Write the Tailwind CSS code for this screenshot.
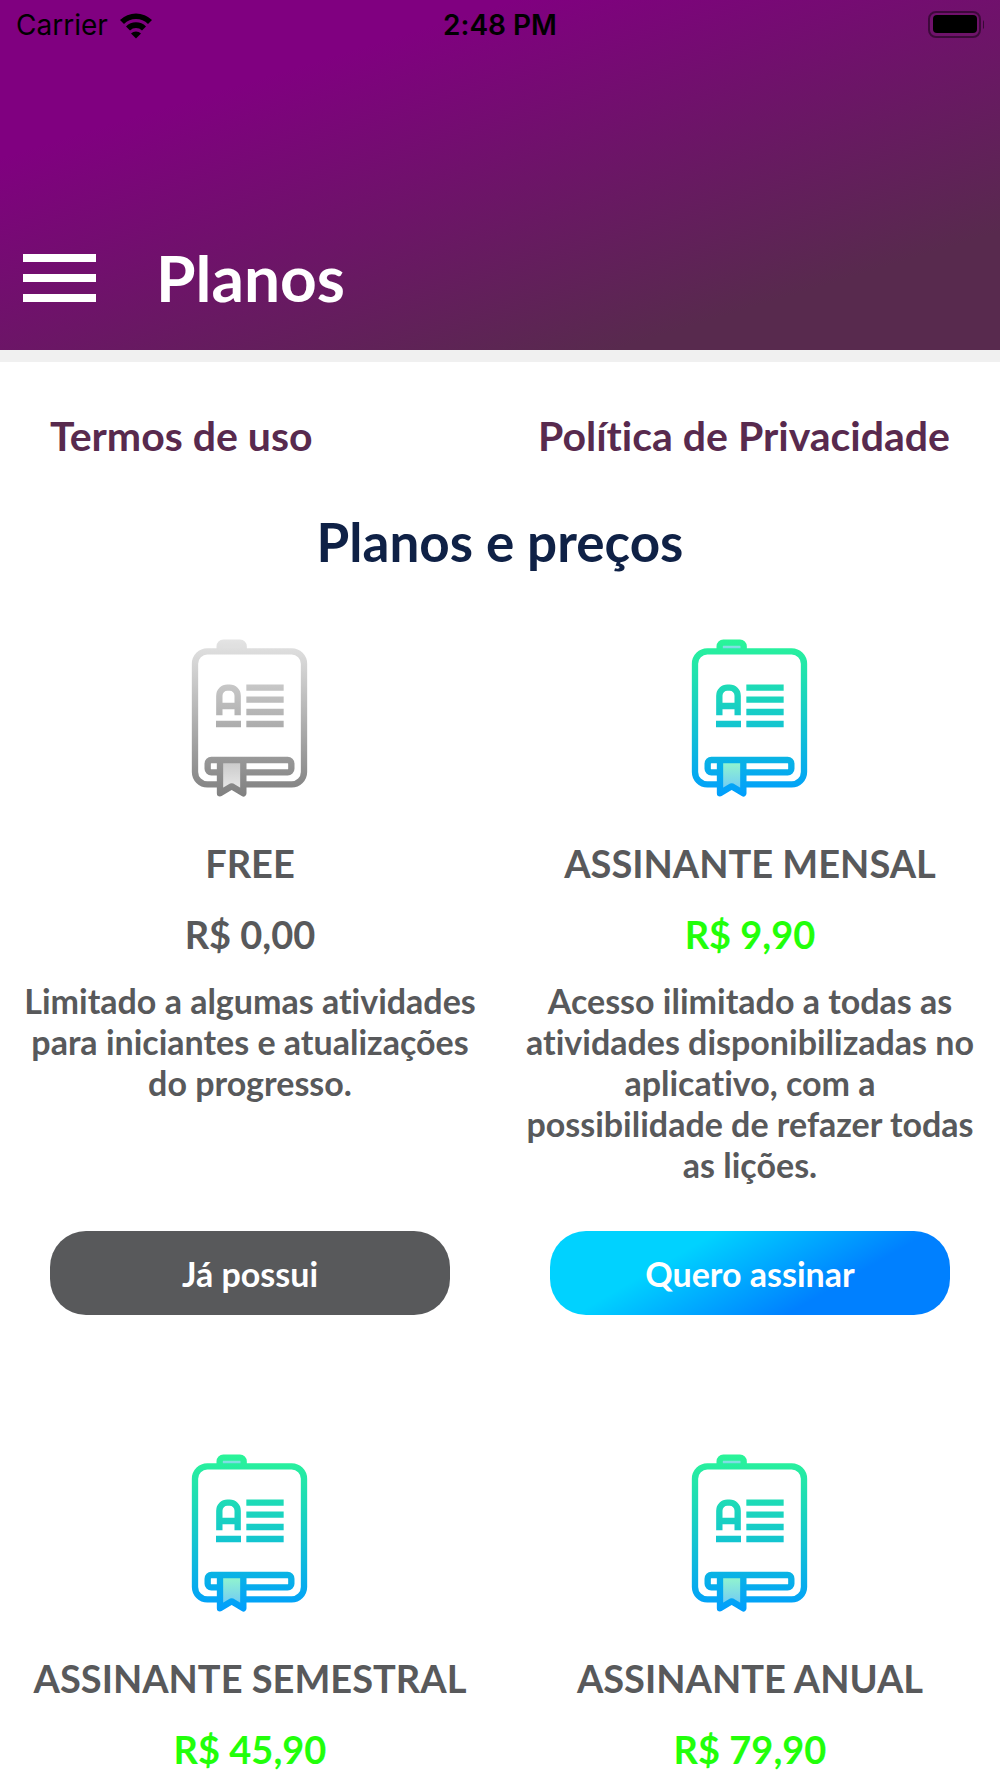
<!DOCTYPE html>
<html lang="pt-BR">

<head>
	<meta charset="UTF-8">
	<meta name="viewport" content="width=device-width, initial-scale=1.0">
	<title>Planos</title>
	<script src="https://cdn.jsdelivr.net/npm/@tailwindcss/browser@4"></script>
</head>

<body class="h-screen flex flex-col overflow-hidden bg-white font-['Lato',sans-serif] font-bold text-[#58595b] [font-variant-ligatures:none]">
	<!-- Shared icon shapes -->
	<svg class="absolute size-0" aria-hidden="true">
		<defs>
			<linearGradient id="color" gradientUnits="userSpaceOnUse" x1="0" y1="57" x2="0" y2="528">
				<stop offset="0" stop-color="#2af598" />
				<stop offset="1" stop-color="#009efd" />
			</linearGradient>
			<linearGradient id="gray" gradientUnits="userSpaceOnUse" x1="0" y1="57" x2="0" y2="528">
				<stop offset="0" stop-color="#e4e4e4" />
				<stop offset="1" stop-color="#808080" />
			</linearGradient>
			<linearGradient id="color-ribbon" x1="0" y1="0" x2="0" y2="1">
				<stop offset="0" stop-color="#94f8cb" />
				<stop offset="1" stop-color="#6cc4fb" />
			</linearGradient>
			<linearGradient id="gray-ribbon" x1="0" y1="0" x2="0" y2="1">
				<stop offset="0" stop-color="#c8c8c8" />
				<stop offset="1" stop-color="#ececec" />
			</linearGradient>
			<g id="book" fill="none" stroke-width="19">
				<path d="M149 492H112a37 37 0 0 1-37-37V130a37 37 0 0 1 37-37H365a37 37 0 0 1 37 37V455a37 37 0 0 1-37 37H221" />
				<path d="M149 93V78a11 11 0 0 1 11-11H210a11 11 0 0 1 11 11V93" />
				<path d="M148 285V226a24 24 0 0 1 24-24H179a24 24 0 0 1 24 24V285M148 257H203M138 311H213" />
				<path d="M229 202H341M229 238H341M229 275H341M229 311H341" />
				<path d="M149 456H124a11 11 0 0 1-11-11V430a11 11 0 0 1 11-11H353a11 11 0 0 1 11 11V445a11 11 0 0 1-11 11H221" />
				<path stroke-linejoin="round" stroke-linecap="round" d="M150 425V519L185 498L220 519V425" />
			</g>
		</defs>
	</svg>

	<header class="h-[350px] shrink-0 flex flex-col justify-between bg-[linear-gradient(163deg,#800080_24%,#582a4e_82%)]">
		<div class="grid grid-cols-3 items-center h-[50px] px-4 font-['Inter',sans-serif] text-[28px] text-black">
			<div class="flex items-center gap-[10px] font-normal">
				<span>Carrier</span>
				<svg class="w-9 h-7" viewBox="0 0 36 28">
					<path d="M2 9a23 23 0 0 1 32 0l-4 4a17 17 0 0 0-24 0z" />
					<path d="M8 15.500a14 14 0 0 1 20 0l-4 4a8.500 8.500 0 0 0-12 0z" />
					<path d="M18 27.500l-5-5a7 7 0 0 1 10 0z" />
				</svg>
			</div>
			<span class="text-center font-semibold">2:48 PM</span>
			<svg class="w-[60px] h-7 justify-self-end" viewBox="0 0 60 28">
				<rect x="5" y="1" width="51" height="25" rx="7" fill="none" stroke="#000" stroke-opacity=".45" stroke-width="2" />
				<rect x="9" y="4" width="44" height="18" rx="4" />
				<path d="M59 9q4 4.500 0 9z" fill-opacity=".5" />
			</svg>
		</div>
		<div class="flex items-center gap-[60px] px-[23px] pb-[34px] text-white">
			<button class="flex flex-col gap-3 w-[73px]" aria-label="Menu">
				<span class="block h-2 w-full bg-white"></span>
				<span class="block h-2 w-full bg-white"></span>
				<span class="block h-2 w-full bg-white"></span>
			</button>
			<h1 class="text-[64px] leading-[76px]">Planos</h1>
		</div>
	</header>

	<main class="flex-1 min-h-0 overflow-hidden border-t-12 border-[#f0f0f0]">
		<nav class="flex justify-between px-[50px] pt-[50px] text-[41px] leading-[48px] text-[#582a4e]">
			<a href="#termos">Termos de uso</a>
			<a href="#privacidade">Política de Privacidade</a>
		</nav>
		<h2 class="mt-[50px] text-center text-[53px] leading-[64px] text-[#0f2146]">Planos e preços</h2>

		<section class="grid grid-cols-2 mt-[63px] text-center">
			<article class="flex flex-col items-center h-[815px] px-6">
				<svg class="w-[120px] h-[160px]" viewBox="60 50 360 480">
					<path d="M150 67H220V93H150z" fill="#e0e0e0" />
					<path d="M150 420V519L185 498L220 519V420z" fill="url(#gray-ribbon)" />
					<use href="#book" stroke="url(#gray)" />
				</svg>
				<h3 class="mt-[42px] text-[38px] leading-[48px]">FREE</h3>
				<p class="mt-[23px] text-[38px] leading-[48px]">R$ 0,00</p>
				<p class="mt-[22px] h-[205px] text-[34px] leading-[41px]">Limitado a algumas atividades para iniciantes e atualizações do progresso.</p>
				<button class="mt-[46px] h-[84px] w-[400px] rounded-[36px] bg-[#58595b] text-[34px] text-white">Já possui</button>
			</article>

			<article class="flex flex-col items-center h-[815px] px-6">
				<svg class="w-[120px] h-[160px]" viewBox="60 50 360 480">
					<path d="M150 67H220V93H150z" fill="url(#color-ribbon)" />
					<path d="M150 420V519L185 498L220 519V420z" fill="url(#color-ribbon)" />
					<use href="#book" stroke="url(#color)" />
				</svg>
				<h3 class="mt-[42px] text-[38px] leading-[48px]">ASSINANTE MENSAL</h3>
				<p class="mt-[23px] text-[38px] leading-[48px] text-[#22ff0a]">R$ 9,90</p>
				<p class="mt-[22px] h-[205px] text-[34px] leading-[41px]">Acesso ilimitado a todas as atividades disponibilizadas no aplicativo, com a possibilidade de refazer todas as lições.</p>
				<button class="mt-[46px] h-[84px] w-[400px] rounded-[36px] bg-[linear-gradient(150deg,#00d2ff_31%,#0080ff_70%)] text-[34px] text-white">Quero assinar</button>
			</article>

			<article class="flex flex-col items-center px-6">
				<svg class="w-[120px] h-[160px]" viewBox="60 50 360 480">
					<path d="M150 67H220V93H150z" fill="url(#color-ribbon)" />
					<path d="M150 420V519L185 498L220 519V420z" fill="url(#color-ribbon)" />
					<use href="#book" stroke="url(#color)" />
				</svg>
				<h3 class="mt-[42px] text-[38px] leading-[48px]">ASSINANTE SEMESTRAL</h3>
				<p class="mt-[23px] text-[38px] leading-[48px] text-[#22ff0a]">R$ 45,90</p>
			</article>

			<article class="flex flex-col items-center px-6">
				<svg class="w-[120px] h-[160px]" viewBox="60 50 360 480">
					<path d="M150 67H220V93H150z" fill="url(#color-ribbon)" />
					<path d="M150 420V519L185 498L220 519V420z" fill="url(#color-ribbon)" />
					<use href="#book" stroke="url(#color)" />
				</svg>
				<h3 class="mt-[42px] text-[38px] leading-[48px]">ASSINANTE ANUAL</h3>
				<p class="mt-[23px] text-[38px] leading-[48px] text-[#22ff0a]">R$ 79,90</p>
			</article>
		</section>
	</main>
</body>

</html>
